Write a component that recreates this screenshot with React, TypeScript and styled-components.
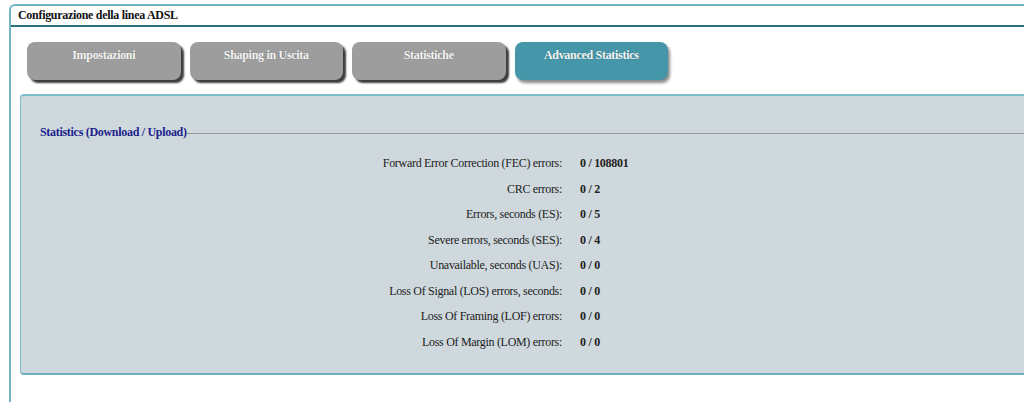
import styled, { createGlobalStyle } from 'styled-components'

const GlobalStyle = createGlobalStyle`
  html, body {
    margin: 0;
    padding: 0;
    background: #ffffff;
    overflow: hidden;
  }

  body {
    font-family: "Liberation Serif", "Times New Roman", serif;
    font-size: 12px;
    letter-spacing: -0.3px;
    color: #222;
  }
`

const Frame = styled.div`
  margin: 4px 0 0 9px;
  width: 1060px;
  height: 420px;
  border-top: 2px solid #72b4c4;
  border-left: 2px solid #72b4c4;
  border-top-left-radius: 6px;
  box-sizing: border-box;
`

const Header = styled.div`
  height: 19px;
  line-height: 18px;
  padding-left: 7px;
  font-weight: bold;
  font-size: 12px;
  color: #111;
  border-bottom: 2px solid #2a7282;
`

const Tabs = styled.div`
  display: flex;
  gap: 9px;
  margin: 15px 0 0 16px;
`

const Tab = styled.div<{ $active?: boolean }>`
  width: 153.5px;
  height: 38px;
  box-sizing: border-box;
  padding-top: 6px;
  border-radius: 8px;
  text-align: center;
  font-weight: bold;
  font-size: 12px;
  line-height: 14px;
  color: #f4f4f4;
  background: ${(p) => (p.$active ? '#4596a8' : '#9d9d9d')};
  box-shadow: ${(p) =>
    p.$active ? '2px 3px 3px rgba(90, 90, 90, 0.7)' : '3px 3px 2px #3c3c3c'};
  text-shadow: 0 0 1px rgba(0, 0, 0, 0.25);
`

const Panel = styled.div`
  margin: 14px 0 0 9px;
  background: #cfd9dd;
  border-top: 2px solid #7fbccb;
  border-left: 1px solid #7fbccb;
  border-bottom: 2px solid #6fb0c0;
  border-radius: 4px 0 0 4px;
  padding: 29px 0 18px 0;
`

const LegendRow = styled.div`
  display: flex;
  align-items: center;
  padding-left: 19px;
  line-height: 14px;
`

const LegendText = styled.span`
  font-weight: bold;
  color: #1e1e8c;
  font-size: 12px;
`

const LegendLine = styled.span`
  flex: 1;
  height: 1px;
  background: #9a9a9a;
  margin-top: 3px;
`

const Stats = styled.div`
  margin-top: 12px;
  display: grid;
  grid-template-columns: 541px 1fr;
  column-gap: 18px;
`

const Label = styled.div`
  text-align: right;
  line-height: 25.5px;
  color: #222;
`

const Value = styled.div`
  line-height: 25.5px;
  font-weight: bold;
  color: #222;
`

const rows: [string, string][] = [
  ['Forward Error Correction (FEC) errors:', '0 / 108801'],
  ['CRC errors:', '0 / 2'],
  ['Errors, seconds (ES):', '0 / 5'],
  ['Severe errors, seconds (SES):', '0 / 4'],
  ['Unavailable, seconds (UAS):', '0 / 0'],
  ['Loss Of Signal (LOS) errors, seconds:', '0 / 0'],
  ['Loss Of Framing (LOF) errors:', '0 / 0'],
  ['Loss Of Margin (LOM) errors:', '0 / 0'],
]

const tabs = ['Impostazioni', 'Shaping in Uscita', 'Statistiche', 'Advanced Statistics']

export default function App() {
  return (
    <>
      <GlobalStyle />
      <Frame>
        <Header>Configurazione della linea ADSL</Header>
        <Tabs>
          {tabs.map((t, i) => (
            <Tab key={t} $active={i === 3}>
              {t}
            </Tab>
          ))}
        </Tabs>
        <Panel>
          <LegendRow>
            <LegendText>Statistics (Download / Upload)</LegendText>
            <LegendLine />
          </LegendRow>
          <Stats>
            {rows.map(([label, value]) => [
              <Label key={label}>{label}</Label>,
              <Value key={label + 'v'}>{value}</Value>,
            ])}
          </Stats>
        </Panel>
      </Frame>
    </>
  )
}
